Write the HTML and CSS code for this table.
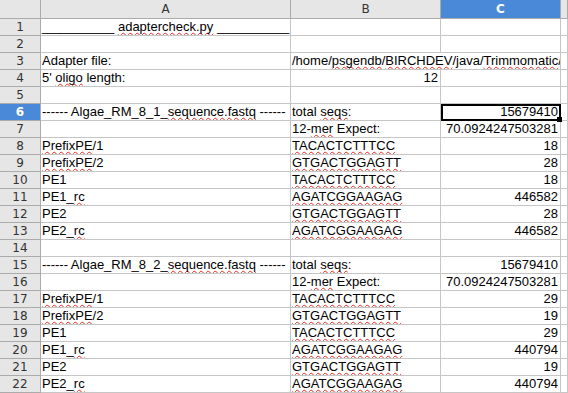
FILE: index.html
```html
<!DOCTYPE html>
<html lang="en">
<head>
    <meta charset="UTF-8">
    <meta name="viewport" content="width=device-width, initial-scale=1.0">
    <title>adaptercheck.ods</title>
    <link rel="stylesheet" href="styles.css">
</head>
<body>
    <div class="sheet">
        <div class="row head">
            <div class="corner"></div>
            <div class="col">A</div>
            <div class="col">B</div>
            <div class="col active">C</div>
            <div class="col"></div>
        </div>

        <div class="row">
            <div class="rh">1</div>
            <div class="cell">__________ <span class="typo">adaptercheck.py</span> __________</div>
            <div class="cell"></div>
            <div class="cell"></div>
            <div class="cell"></div>
        </div>
        <div class="row">
            <div class="rh">2</div>
            <div class="cell"></div>
            <div class="cell"></div>
            <div class="cell"></div>
            <div class="cell"></div>
        </div>
        <div class="row">
            <div class="rh">3</div>
            <div class="cell">Adapter file:</div>
            <div class="cell wide">/home/<span class="typo">psgendb</span>/<span class="typo">BIRCHDEV</span>/java/<span class="typo">Trimmomatic</span>/a</div>
            <div class="cell"></div>
        </div>
        <div class="row">
            <div class="rh">4</div>
            <div class="cell">5' <span class="typo">oligo</span> length:</div>
            <div class="cell val">12</div>
            <div class="cell"></div>
            <div class="cell"></div>
        </div>
        <div class="row">
            <div class="rh">5</div>
            <div class="cell"></div>
            <div class="cell"></div>
            <div class="cell"></div>
            <div class="cell"></div>
        </div>

        <!-- first fastq file -->
        <div class="row">
            <div class="rh active">6</div>
            <div class="cell">------ Algae_RM_8_1_<span class="typo">sequence.fastq</span> ------</div>
            <div class="cell">total <span class="typo">seqs</span>:</div>
            <div class="cell val selected">15679410</div>
            <div class="cell"></div>
        </div>
        <div class="row">
            <div class="rh">7</div>
            <div class="cell"></div>
            <div class="cell">12-<span class="typo">mer</span> Expect:</div>
            <div class="cell val">70.0924247503281</div>
            <div class="cell"></div>
        </div>
        <div class="row">
            <div class="rh">8</div>
            <div class="cell"><span class="typo">PrefixPE</span>/1</div>
            <div class="cell"><span class="typo">TACACTCTTTCC</span></div>
            <div class="cell val">18</div>
            <div class="cell"></div>
        </div>
        <div class="row">
            <div class="rh">9</div>
            <div class="cell"><span class="typo">PrefixPE</span>/2</div>
            <div class="cell"><span class="typo">GTGACTGGAGTT</span></div>
            <div class="cell val">28</div>
            <div class="cell"></div>
        </div>
        <div class="row">
            <div class="rh">10</div>
            <div class="cell">PE1</div>
            <div class="cell"><span class="typo">TACACTCTTTCC</span></div>
            <div class="cell val">18</div>
            <div class="cell"></div>
        </div>
        <div class="row">
            <div class="rh">11</div>
            <div class="cell">PE1_<span class="typo">rc</span></div>
            <div class="cell"><span class="typo">AGATCGGAAGAG</span></div>
            <div class="cell val">446582</div>
            <div class="cell"></div>
        </div>
        <div class="row">
            <div class="rh">12</div>
            <div class="cell">PE2</div>
            <div class="cell"><span class="typo">GTGACTGGAGTT</span></div>
            <div class="cell val">28</div>
            <div class="cell"></div>
        </div>
        <div class="row">
            <div class="rh">13</div>
            <div class="cell">PE2_<span class="typo">rc</span></div>
            <div class="cell"><span class="typo">AGATCGGAAGAG</span></div>
            <div class="cell val">446582</div>
            <div class="cell"></div>
        </div>
        <div class="row">
            <div class="rh">14</div>
            <div class="cell"></div>
            <div class="cell"></div>
            <div class="cell"></div>
            <div class="cell"></div>
        </div>

        <!-- second fastq file -->
        <div class="row">
            <div class="rh">15</div>
            <div class="cell">------ Algae_RM_8_2_<span class="typo">sequence.fastq</span> ------</div>
            <div class="cell">total <span class="typo">seqs</span>:</div>
            <div class="cell val">15679410</div>
            <div class="cell"></div>
        </div>
        <div class="row">
            <div class="rh">16</div>
            <div class="cell"></div>
            <div class="cell">12-<span class="typo">mer</span> Expect:</div>
            <div class="cell val">70.0924247503281</div>
            <div class="cell"></div>
        </div>
        <div class="row">
            <div class="rh">17</div>
            <div class="cell"><span class="typo">PrefixPE</span>/1</div>
            <div class="cell"><span class="typo">TACACTCTTTCC</span></div>
            <div class="cell val">29</div>
            <div class="cell"></div>
        </div>
        <div class="row">
            <div class="rh">18</div>
            <div class="cell"><span class="typo">PrefixPE</span>/2</div>
            <div class="cell"><span class="typo">GTGACTGGAGTT</span></div>
            <div class="cell val">19</div>
            <div class="cell"></div>
        </div>
        <div class="row">
            <div class="rh">19</div>
            <div class="cell">PE1</div>
            <div class="cell"><span class="typo">TACACTCTTTCC</span></div>
            <div class="cell val">29</div>
            <div class="cell"></div>
        </div>
        <div class="row">
            <div class="rh">20</div>
            <div class="cell">PE1_<span class="typo">rc</span></div>
            <div class="cell"><span class="typo">AGATCGGAAGAG</span></div>
            <div class="cell val">440794</div>
            <div class="cell"></div>
        </div>
        <div class="row">
            <div class="rh">21</div>
            <div class="cell">PE2</div>
            <div class="cell"><span class="typo">GTGACTGGAGTT</span></div>
            <div class="cell val">19</div>
            <div class="cell"></div>
        </div>
        <div class="row">
            <div class="rh">22</div>
            <div class="cell">PE2_<span class="typo">rc</span></div>
            <div class="cell"><span class="typo">AGATCGGAAGAG</span></div>
            <div class="cell val">440794</div>
            <div class="cell"></div>
        </div>
    </div>
</body>
</html>
```

FILE: styles.css
```css
body {
    margin: 0;
    padding: 0;
    height: 100vh;
    overflow: hidden;
    background: #fff;
    font-family: "Liberation Sans", Arial, sans-serif;
    color: #000;
}
.sheet {
    display: flex;
    flex-direction: column;
}
.row {
    display: grid;
    grid-template-columns: 41px 250px 150px 120px 1fr;
    height: 17px;
}
.row.head {
    height: 19px;
}
.corner, .col, .rh {
    box-sizing: border-box;
    background: #e6e6e6;
    border-right: 1px solid #ababab;
    border-bottom: 1px solid #ababab;
    font-family: "DejaVu Sans", sans-serif;
    font-size: 12px;
    color: #333;
    text-align: center;
}
.col {
    line-height: 18px;
}
.rh {
    line-height: 16px;
}
.col.active, .rh.active {
    background: #4a89d8;
    color: #fff;
    font-weight: bold;
}
.cell {
    box-sizing: border-box;
    border-right: 1px solid #c6c6c6;
    border-bottom: 1px solid #c6c6c6;
    padding: 0 2px 0 1px;
    font-size: 13px;
    line-height: 16px;
    white-space: nowrap;
    overflow: hidden;
}
/* long path runs on over the empty C cell */
.cell.wide {
    grid-column: span 2;
}
.cell.val {
    text-align: right;
}
.cell.selected {
    position: relative;
    overflow: visible;
    outline: 2px solid #000;
    outline-offset: -2px;
}
/* fill handle on the cursor cell */
.cell.selected::after {
    content: "";
    position: absolute;
    right: -2px;
    bottom: -2px;
    width: 5px;
    height: 5px;
    background: #000;
}
.typo {
    text-decoration: underline wavy #e8261e;
    text-decoration-thickness: 1px;
    text-decoration-skip-ink: none;
    text-underline-offset: 1px;
}
```
